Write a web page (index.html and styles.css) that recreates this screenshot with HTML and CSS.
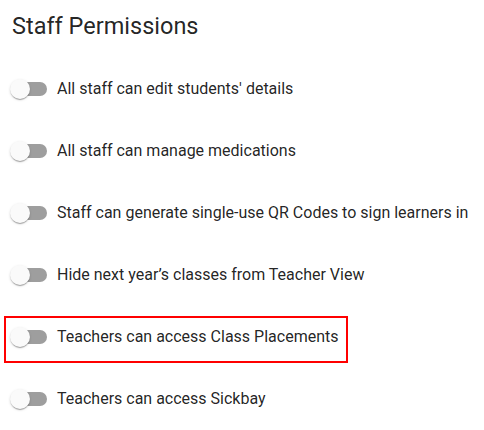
FILE: index.html
```html
<!DOCTYPE html>
<html lang="en">
<head>
<meta charset="utf-8">
<title>Staff Permissions</title>
<link rel="stylesheet" href="styles.css">
</head>
<body>
<div class="panel">
  <h2 class="title">Staff Permissions</h2>
  <div class="list">
    <div class="row">
      <label class="option"><span class="switch"><span class="thumb"></span><span class="track"></span></span><span class="label">All staff can edit students' details</span></label>
    </div>
    <div class="row">
      <label class="option"><span class="switch"><span class="thumb"></span><span class="track"></span></span><span class="label">All staff can manage medications</span></label>
    </div>
    <div class="row">
      <label class="option"><span class="switch"><span class="thumb"></span><span class="track"></span></span><span class="label">Staff can generate single-use QR Codes to sign learners in</span></label>
    </div>
    <div class="row">
      <label class="option"><span class="switch"><span class="thumb"></span><span class="track"></span></span><span class="label">Hide next year’s classes from Teacher View</span></label>
    </div>
    <div class="row row-highlight">
      <label class="option"><span class="switch"><span class="thumb"></span><span class="track"></span></span><span class="label">Teachers can access Class Placements</span></label>
    </div>
    <div class="row">
      <label class="option"><span class="switch"><span class="thumb"></span><span class="track"></span></span><span class="label">Teachers can access Sickbay</span></label>
    </div>
  </div>
</div>
</body>
</html>
```

FILE: styles.css
```css
html, body {
  margin: 0;
  padding: 0;
  background: #ffffff;
}

body {
  font-family: Roboto, "Liberation Sans", Arial, sans-serif;
  color: rgba(0, 0, 0, 0.87);
}

.panel {
  padding: 12px 12px 0 12px;
}

.title {
  margin: 0;
  font-size: 23.5px;
  font-weight: 400;
  line-height: 28px;
  letter-spacing: 0;
}

.list {
  display: flex;
  flex-direction: column;
  padding-top: 18px;
}

.row {
  position: relative;
  padding: 12px 0;
  height: 38px;
}

.row-highlight::after {
  content: "";
  position: absolute;
  left: -8px;
  top: 10px;
  width: 340px;
  height: 43px;
  border: 2px solid #ff0000;
  pointer-events: none;
}

.option {
  display: inline-flex;
  align-items: center;
  height: 38px;
  margin-left: -11px;
  white-space: nowrap;
  cursor: pointer;
}

.switch {
  display: flex;
  align-items: center;
  height: 38px;
  padding-left: 9px;
}

.thumb {
  position: relative;
  z-index: 1;
  width: 20px;
  height: 20px;
  border-radius: 50%;
  background: #fafafa;
  box-shadow: 0 2px 1px -1px rgba(0, 0, 0, 0.2), 0 1px 1px 0 rgba(0, 0, 0, 0.14), 0 1px 3px 0 rgba(0, 0, 0, 0.12);
}

.track {
  width: 34px;
  height: 14px;
  margin-left: -17px;
  border-radius: 7px;
  background: #9e9e9e;
}

.label {
  margin-left: 10px;
  font-size: 16px;
  line-height: 24px;
}
```
